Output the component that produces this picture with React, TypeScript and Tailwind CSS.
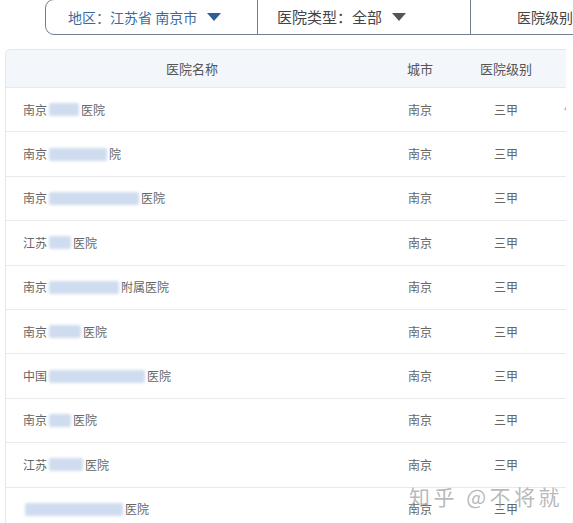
import React from 'react';

type Row = { parts: (string | number)[]; extra?: string };

// string = visible text, number = width of a blurred (redacted) block
const rows: Row[] = [
  { parts: ['南京', 30, '医院'], extra: '仁' },
  { parts: ['南京', 58, '院'] },
  { parts: ['南京', 90, '医院'] },
  { parts: ['江苏', 22, '医院'] },
  { parts: ['南京', 70, '附属医院'] },
  { parts: ['南京', 32, '医院'] },
  { parts: ['中国', 96, '医院'] },
  { parts: ['南京', 22, '医院'] },
  { parts: ['江苏', 34, '医院'] },
  { parts: [98, '医院'] },
];

function Caret({ color }: { color: string }) {
  return (
    <svg width="14" height="8" viewBox="0 0 14 8" className="ml-[10px]">
      <path d="M0 0 L14 0 L7 8 Z" fill={color} />
    </svg>
  );
}

function Redacted({ w }: { w: number }) {
  return (
    <span className="mx-[2px] inline-block h-[13px] rounded-[2px] bg-[#cfdcef] blur-[1.5px]" style={{ width: w }} />
  );
}

export default function App() {
  return (
    <div className="relative h-[523px] w-[573px] overflow-hidden bg-white font-['Noto_Sans_CJK_SC','Noto_Sans',sans-serif]">
      {/* filter tabs */}
      <div className="ml-[45px] flex h-[36px] w-[560px] -mt-px rounded-l-[9px] border border-[#6f7f90] bg-white">
        <div className="flex w-[212px] shrink-0 items-center border-r border-[#6f7f90] pl-[22px] text-[14px] text-[#3c6a9c]">
          地区：江苏省 南京市
          <Caret color="#2f5e93" />
        </div>
        <div className="flex w-[213px] shrink-0 items-center border-r border-[#6f7f90] pl-[19px] text-[15px] text-[#444]">
          医院类型：全部
          <Caret color="#555" />
        </div>
        <div className="flex flex-1 items-center pl-[46px] text-[14px] text-[#444]">医院级别</div>
      </div>

      {/* table */}
      <div className="ml-[5px] mt-[14px] w-[561px] overflow-hidden rounded-tl-[5px] border-l border-t border-[#e3e7ec]">
        <div className="flex h-[38px] items-center border-b border-[#e6e9ee] bg-[#f3f6fb] text-[13px] text-[#555]">
          <div className="w-[372px] shrink-0 text-center">医院名称</div>
          <div className="w-[84px] shrink-0 text-center">城市</div>
          <div className="w-[88px] shrink-0 text-center">医院级别</div>
        </div>
        {rows.map((r, i) => (
          <div key={i} className="flex h-[44.4px] items-center border-b border-[#e8eaed] text-[12px] text-[#666]">
            <div className="flex w-[372px] shrink-0 items-center pl-[17px]">
              {r.parts.map((p, j) =>
                typeof p === 'number' ? <Redacted key={j} w={p} /> : <span key={j}>{p}</span>
              )}
            </div>
            <div className="w-[84px] shrink-0 text-center">南京</div>
            <div className="w-[88px] shrink-0 text-center">三甲</div>
            <div className="flex-1 pl-[14px] text-[#999]">{r.extra}</div>
          </div>
        ))}
      </div>

      {/* watermark */}
      <div className="absolute left-[409px] top-[481px] text-[21px] tracking-[3.5px] text-[#9a9a9a]/70">
        知乎 @不将就
      </div>
    </div>
  );
}
